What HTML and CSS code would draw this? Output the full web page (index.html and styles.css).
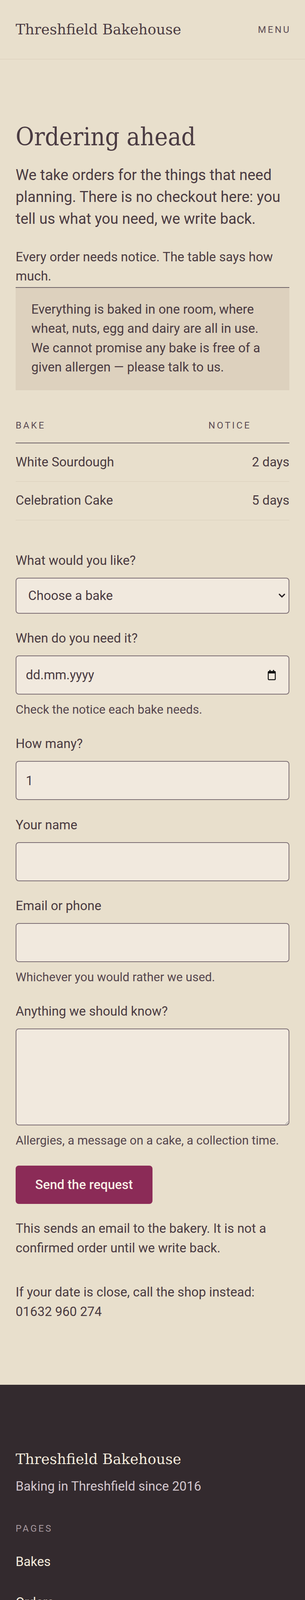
FILE: index.html
```html
<!DOCTYPE html>
<html lang="en">
<head>
  <meta charset="utf-8">
  <meta name="viewport" content="width=device-width, initial-scale=1">
  <title>Ordering ahead · Threshfield Bakehouse</title>
  <link rel="stylesheet" href="styles.css">
</head>
<body>
  <header class="site-header">
    <a class="brand" href="#">Threshfield Bakehouse</a>
    <button class="menu-toggle" type="button">Menu</button>
  </header>

  <main class="page">
    <h1>Ordering ahead</h1>
    <p class="lead">We take orders for the things that need planning. There is no checkout here: you tell us what you need, we write back.</p>

    <p class="notice-intro">Every order needs notice. The table says how much.</p>

    <aside class="allergen-note">
      <p>Everything is baked in one room, where wheat, nuts, egg and dairy are all in use. We cannot promise any bake is free of a given allergen — please talk to us.</p>
    </aside>

    <table class="notice-table">
      <thead>
        <tr>
          <th>Bake</th>
          <th class="col-notice">Notice</th>
        </tr>
      </thead>
      <tbody>
        <tr>
          <td>White Sourdough</td>
          <td class="days">2 days</td>
        </tr>
        <tr>
          <td>Celebration Cake</td>
          <td class="days">5 days</td>
        </tr>
      </tbody>
    </table>

    <form class="order-form" action="#" method="post">
      <div class="field">
        <label for="bake">What would you like?</label>
        <div class="select-wrap">
          <select id="bake" name="bake">
            <option value="">Choose a bake</option>
            <option>White Sourdough</option>
            <option>Celebration Cake</option>
          </select>
          <svg class="chevron" width="18" height="12" viewBox="0 0 18 12" aria-hidden="true">
            <path d="M2.5 2.5 9 9l6.5-6.5" fill="none" stroke="#2b2326" stroke-width="3.2" stroke-linecap="round" stroke-linejoin="round"/>
          </svg>
        </div>
      </div>

      <div class="field">
        <label for="date">When do you need it?</label>
        <div class="date-field">
          <input id="date" name="date" type="text" inputmode="numeric" placeholder="dd.mm.yyyy">
          <svg class="calendar" width="22" height="28" viewBox="0 0 22 28" aria-hidden="true">
            <rect x="2" y="5" width="18" height="21" rx="2" fill="none" stroke="#111" stroke-width="2.4"/>
            <rect x="2" y="5" width="18" height="5" fill="#111"/>
            <rect x="5" y="1" width="3" height="6" rx="1" fill="#111"/>
            <rect x="14" y="1" width="3" height="6" rx="1" fill="#111"/>
          </svg>
        </div>
        <p class="help">Check the notice each bake needs.</p>
      </div>

      <div class="field">
        <label for="qty">How many?</label>
        <input id="qty" name="qty" type="number" min="1" value="1">
      </div>

      <div class="field">
        <label for="name">Your name</label>
        <input id="name" name="name" type="text">
      </div>

      <div class="field">
        <label for="contact">Email or phone</label>
        <input id="contact" name="contact" type="text">
        <p class="help">Whichever you would rather we used.</p>
      </div>

      <div class="field">
        <label for="notes">Anything we should know?</label>
        <textarea id="notes" name="notes"></textarea>
        <p class="help">Allergies, a message on a cake, a collection time.</p>
      </div>

      <button class="send" type="submit">Send the request</button>
      <p class="form-note">This sends an email to the bakery. It is not a confirmed order until we write back.</p>
    </form>

    <p class="call-note">If your date is close, call the shop instead: <a href="tel:01632960274">01632 960 274</a></p>
  </main>

  <footer class="site-footer">
    <div class="footer-main">
      <p class="footer-brand">Threshfield Bakehouse</p>
      <p class="tagline">Baking in Threshfield since 2016</p>

      <nav class="footer-group">
        <h2>Pages</h2>
        <ul>
          <li><a href="#">Bakes</a></li>
          <li><a href="#">Orders</a></li>
          <li><a href="#">About</a></li>
          <li><a href="#">Contact</a></li>
        </ul>
      </nav>

      <div class="footer-group footer-group--contact">
        <h2>Contact</h2>
        <ul>
          <li><a href="tel:01632960274">01632 960 274</a></li>
          <li><a href="#">hello@threshfieldbakehouse.example</a></li>
        </ul>
        <p class="address">14 Wharfeside Avenue, Threshfield BD23</p>
      </div>

      <nav class="footer-group">
        <h2>Legal</h2>
        <ul>
          <li><a href="#">Privacy</a></li>
          <li><a href="#">Terms</a></li>
        </ul>
      </nav>

      <p class="allergen-foot">Allergen information is on every bake. Ask us anything we have not written down.</p>
    </div>
    <div class="footer-base">
      <p>© 2026 Threshfield Bakehouse</p>
    </div>
  </footer>
</body>
</html>
```

FILE: styles.css
```css
* {
  margin: 0;
  padding: 0;
  box-sizing: border-box;
}

html {
  background: #332a2e;
}

body {
  font-family: Roboto, "Liberation Sans", sans-serif;
  font-size: 33px;
  line-height: 1.5;
  color: #4a3b42;
  background: #e8dfcc;
}

a {
  color: inherit;
  text-decoration: none;
}

/* Header */
.site-header {
  height: 152px;
  padding: 0 40px;
  display: flex;
  align-items: center;
  justify-content: space-between;
  border-bottom: 1px solid #d8cdba;
}

.brand,
.footer-brand {
  font-family: "DejaVu Serif", "Liberation Serif", serif;
  font-size: 36.5px;
  line-height: 1.2;
}

.menu-toggle {
  font: inherit;
  font-size: 24px;
  line-height: normal;
  letter-spacing: 0.18em;
  text-transform: uppercase;
  color: #5b4c54;
  background: none;
  border: none;
  margin-right: -4px;
  cursor: pointer;
}

/* Page */
.page {
  padding: 162px 40px 163px;
}

h1 {
  font-family: "DejaVu Serif Condensed", "DejaVu Serif", "Liberation Serif", serif;
  font-stretch: condensed;
  font-weight: 400;
  font-size: 64px;
  line-height: 1.15;
}

.lead {
  margin-top: 32px;
  font-size: 38px;
  line-height: 56px;
}

.notice-intro {
  margin-top: 45px;
}

.allergen-note {
  margin-top: 3px;
  padding: 30px 40px 34px;
  background: #ddd1be;
  border-top: 2px solid #6f6368;
}

/* Notice table */
.notice-table {
  width: 100%;
  margin-top: 48px;
  border-collapse: collapse;
}

.notice-table th {
  text-align: left;
  font-weight: 400;
  font-size: 24px;
  line-height: 36px;
  letter-spacing: 0.18em;
  text-transform: uppercase;
  color: #5b4c54;
  padding: 24px 0 26px;
  border-bottom: 2px solid #6f6368;
}

.notice-table th.col-notice {
  width: 207px;
}

.notice-table td {
  padding: 23px 0 25px;
  border-bottom: 1px solid #d8cdba;
}

.notice-table td.days {
  text-align: right;
}

/* Form */
.order-form {
  margin-top: 78px;
  display: flex;
  flex-direction: column;
  gap: 38.5px;
}

.field label {
  display: block;
  margin-bottom: 19.5px;
}

.field input,
.field select,
.field textarea,
.date-field {
  display: block;
  width: 100%;
  font: inherit;
  color: inherit;
  height: 100px;
  padding: 0 24px;
  background: #f1e9de;
  border: 2px solid #7b6d73;
  border-radius: 8px;
  outline: none;
}

.select-wrap {
  position: relative;
}

.field select {
  appearance: none;
  height: 92px;
  padding-left: 30px;
}

.chevron {
  position: absolute;
  right: 10px;
  top: 40px;
  pointer-events: none;
}

.date-field {
  display: flex;
  align-items: center;
  gap: 12px;
  padding-right: 32px;
}

.field .date-field input {
  flex: 1;
  height: auto;
  padding: 0;
  border: none;
  border-radius: 0;
  background: transparent;
}

.date-field input::placeholder {
  color: #4a3b42;
  opacity: 1;
}

.field textarea {
  height: 248px;
  padding: 24px;
  resize: vertical;
}

.help {
  margin-top: 16px;
  font-size: 31px;
  color: #55464e;
}

.send {
  align-self: flex-start;
  margin-top: 2px;
  font: inherit;
  font-weight: 500;
  color: #f7efe6;
  background: #8b2b57;
  border: none;
  border-radius: 8px;
  padding: 24px 50px;
  cursor: pointer;
}

.call-note {
  margin-top: 64px;
}

/* Footer */
.site-footer {
  background: #332a2e;
  color: #d2c6cd;
}

.footer-main {
  padding: 169px 40px 38px;
}

.footer-brand {
  color: #f4ecdd;
}

.tagline {
  margin-top: 22px;
}

.footer-group {
  margin-top: 66px;
}

.footer-group--contact {
  margin-top: 59px;
}

.footer-group h2 {
  font-weight: 400;
  font-size: 24px;
  line-height: 36px;
  letter-spacing: 0.18em;
  text-transform: uppercase;
  color: #a7999f;
  margin-bottom: 14px;
}

.footer-group ul {
  list-style: none;
}

.footer-group a {
  display: block;
  padding: 27.25px 0;
  color: #f4ecdd;
}

.address {
  margin-top: 8px;
}

.allergen-foot {
  margin-top: 55px;
  line-height: 1.6;
}

.footer-base {
  border-top: 1px solid #62575c;
  padding: 38px 40px 150px;
  font-size: 29px;
  color: #b1a4ab;
}
```
